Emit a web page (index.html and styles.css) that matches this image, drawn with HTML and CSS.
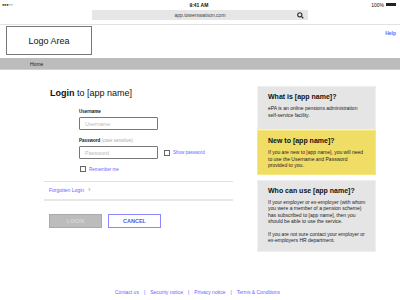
FILE: index.html
```html
<!DOCTYPE html>
<html lang="en">
<head>
    <meta charset="UTF-8">
    <title>Login</title>
    <link rel="stylesheet" href="styles.css">
</head>
<body>
    <!-- Status bar -->
    <div class="status-bar">
        <span class="signal">●●●○○</span>
        <span class="time">9:41 AM</span>
        <span class="battery">100% <span class="battery-icon"></span></span>
    </div>

    <!-- Address bar -->
    <div class="browser">
        <div class="address">
            <span>app.towerswatson.com</span>
            <svg class="search-icon" width="7" height="7" viewBox="0 0 10 10">
                <circle cx="4" cy="4" r="3" fill="none" stroke="#333" stroke-width="1.6"/>
                <line x1="6.2" y1="6.2" x2="9" y2="9" stroke="#333" stroke-width="1.8"/>
            </svg>
        </div>
    </div>

    <!-- Header -->
    <div class="header">
        <div class="logo">Logo Area</div>
        <a class="help" href="#">Help</a>
    </div>
    <div class="nav"><span>Home</span></div>

    <!-- Main -->
    <div class="main">
        <div class="login">
            <h1><b>Login</b> to [app name]</h1>
            <div class="form">
                <label>Username</label>
                <div class="input">Username</div>
                <label class="pw-label">Password <span>(case sensitive)</span></label>
                <div class="row">
                    <div class="input">Password</div>
                    <span class="check"></span>
                    <a class="link" href="#">Show password</a>
                </div>
                <div class="row remember">
                    <span class="check"></span>
                    <a class="link" href="#">Remember me</a>
                </div>
            </div>
            <div class="forgot">
                <a class="link" href="#">Forgotten Login</a>
                <span class="chev">›</span>
            </div>
            <div class="buttons">
                <button class="btn-login">LOGIN</button>
                <button class="btn-cancel">CANCEL</button>
            </div>
        </div>

        <div class="side">
            <div class="box first">
                <h3>What is [app name]?</h3>
                <p>ePA is an online pensions administration self-service facility.</p>
            </div>
            <div class="box yellow">
                <h3>New to [app name]?</h3>
                <p>If you are new to [app name], you will need to use the Username and Password provided to you.</p>
            </div>
            <div class="box third">
                <h3>Who can use [app name]?</h3>
                <p>If your employer or ex-employer (with whom you were a member of a pension scheme) has subscribed to [app name], then you should be able to use the service.</p>
                <p>If you are not sure contact your employer or ex-employers HR department.</p>
            </div>
        </div>
    </div>

    <!-- Footer -->
    <div class="footer">
        <a href="#">Contact us</a><span>|</span>
        <a href="#">Security notice</a><span>|</span>
        <a href="#">Privacy notice</a><span>|</span>
        <a href="#">Terms &amp; Conditions</a>
    </div>
</body>
</html>
```

FILE: styles.css
```css
/* Base */
body {
    font-family: "Liberation Sans", Arial, sans-serif;
    margin: 0;
    padding: 0;
    background: #ffffff;
    color: #111;
    width: 400px;
    height: 300px;
    overflow: hidden;
}
a {
    text-decoration: none;
}

/* Status bar */
.status-bar {
    height: 9px;
    display: flex;
    justify-content: space-between;
    align-items: center;
    padding: 0 4px 0 2px;
    font-size: 5px;
}
.signal {
    font-size: 4px;
    letter-spacing: -0.3px;
    color: #222;
}
.time {
    font-weight: bold;
    margin-left: 14px;
}
.battery {
    display: flex;
    align-items: center;
    gap: 2px;
}
.battery-icon {
    width: 9px;
    height: 3px;
    background: #222;
    border-right: 1px solid #222;
}

/* Address bar */
.browser {
    height: 16px;
    border-bottom: 1px solid #e2e2e2;
    display: flex;
    justify-content: center;
    padding-top: 1px;
    box-sizing: border-box;
}
.address {
    width: 216px;
    height: 10px;
    background: #e6e6e6;
    border-radius: 1px;
    font-size: 5px;
    color: #444;
    display: flex;
    align-items: center;
    justify-content: center;
    position: relative;
}
.search-icon {
    position: absolute;
    right: 4px;
    top: 2px;
}

/* Header */
.header {
    height: 32px;
    display: flex;
    justify-content: space-between;
    align-items: flex-start;
    padding: 1px 4px 0 6px;
}
.logo {
    width: 84px;
    height: 27px;
    border: 1px solid #777;
    display: flex;
    align-items: center;
    justify-content: center;
    font-size: 9px;
    color: #111;
}
.help {
    font-size: 5px;
    font-weight: bold;
    color: #6c63ff;
    margin-top: 4px;
}
.nav {
    height: 11px;
    background: #bcbcbd;
    border-bottom: 1px solid #d0d0d0;
    font-size: 5px;
    display: flex;
    align-items: center;
    padding-left: 30px;
    color: #222;
}

/* Main */
.main {
    display: flex;
    padding-left: 44px;
}
.login {
    width: 189px;
    padding-top: 18px;
}
.login h1 {
    font-size: 9px;
    font-weight: normal;
    margin: 0 0 0 6px;
}
.form {
    padding-left: 35px;
    padding-top: 11px;
}
.form label {
    display: block;
    font-size: 4.5px;
    font-weight: bold;
    margin-bottom: 3px;
}
.form label span {
    font-weight: normal;
    color: #aaa;
}
.pw-label {
    margin-top: 8px;
}
.input {
    width: 72px;
    height: 11px;
    border: 1px solid #777;
    border-radius: 1px;
    font-size: 5.5px;
    color: #bbb;
    padding-left: 5px;
    display: flex;
    align-items: center;
}
.row {
    display: flex;
    align-items: center;
}
.check {
    width: 4px;
    height: 4px;
    border: 1px solid #666;
    margin: 0 3px 0 6px;
}
.remember {
    margin-top: 7px;
}
.remember .check {
    margin-left: 1px;
}
.link {
    font-size: 4.5px;
    color: #6c63ff;
}
.forgot {
    margin-top: 9px;
    border-top: 1px solid #e0e0e0;
    border-bottom: 2px solid #e8e8e8;
    padding: 4px 0 5px 5px;
    display: flex;
    align-items: center;
    gap: 4px;
}
.forgot .link {
    font-size: 5px;
}
.chev {
    font-size: 8px;
    color: #999;
    line-height: 1;
}
.buttons {
    display: flex;
    gap: 6px;
    margin-top: 13px;
    padding-left: 5px;
}
.buttons button {
    width: 53px;
    height: 14px;
    font-family: inherit;
    font-size: 5.5px;
    font-weight: bold;
    padding: 0;
}
.btn-login {
    background: #bcbcbd;
    border: 1px solid #aaa;
    color: #d6d6d6;
}
.btn-cancel {
    background: #fff;
    border: 1px solid #8c86ff;
    color: #5b54e6;
}

/* Side boxes */
.side {
    width: 119px;
    margin-left: 24px;
    padding-top: 16px;
}
.box {
    background: #e5e5e5;
    border: 1px solid #efefef;
    padding: 6px 7px 5px 10px;
}
.box h3 {
    font-size: 7px;
    margin: 0 0 5px;
}
.box p {
    font-size: 5px;
    line-height: 6.5px;
    margin: 0;
    color: #222;
}
.first {
    padding-bottom: 11px;
}
.yellow {
    background: #f0dd66;
    border-color: #f5e87e;
}
.third {
    margin-top: 5px;
    padding-bottom: 7px;
}
.third p + p {
    margin-top: 6px;
}

/* Footer */
.footer {
    position: absolute;
    top: 289px;
    left: 115px;
    display: flex;
    font-size: 5px;
}
.footer a {
    color: #6c63ff;
}
.footer span {
    color: #6c63ff;
    margin: 0 5px;
}
```
